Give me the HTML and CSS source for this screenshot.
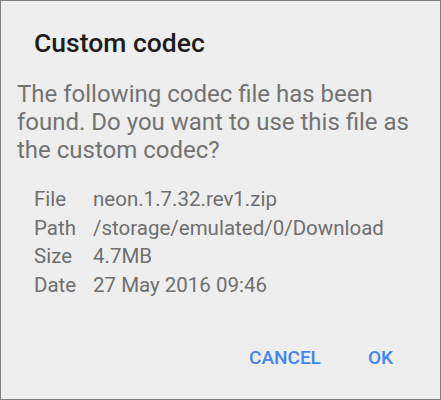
FILE: index.html
```html
<!DOCTYPE html>
<html>
<head>
<meta charset="utf-8">
<link rel="stylesheet" href="styles.css">
</head>
<body>
<div class="dialog">
  <h1 class="title">Custom codec</h1>
  <p class="message">The following codec file has been found. Do you want to use this file as the custom codec?</p>
  <div class="details">
    <span class="label">File</span><span class="value">neon.1.7.32.rev1.zip</span>
    <span class="label">Path</span><span class="value">/storage/emulated/0/Download</span>
    <span class="label">Size</span><span class="value">4.7MB</span>
    <span class="label">Date</span><span class="value">27 May 2016 09:46</span>
  </div>
  <div class="actions">
    <button class="btn">CANCEL</button>
    <button class="btn">OK</button>
  </div>
</div>
</body>
</html>
```

FILE: styles.css
```css
html, body {
  margin: 0;
  padding: 0;
}
body {
  font-family: Roboto, "Noto Sans", sans-serif;
}
.dialog {
  box-sizing: border-box;
  width: 441px;
  height: 400px;
  background: #eeeeee;
  border: 1px solid #7f7f7f;
  display: flex;
  flex-direction: column;
}
.title {
  margin: 0;
  padding: 25px 0 0 33px;
  font-size: 26.5px;
  font-weight: 500;
  line-height: 34px;
  color: #1c1c1c;
}
.message {
  margin: 20px 0 0 0;
  padding: 0 16px;
  font-size: 24px;
  line-height: 28px;
  color: #737373;
}
.details {
  margin-top: 21px;
  padding-left: 33px;
  display: grid;
  grid-template-columns: 59px auto;
  font-size: 20.5px;
  line-height: 28.6px;
  color: #6f6f6f;
}
.actions {
  margin-top: auto;
  padding: 0 47px 29px 0;
  display: flex;
  justify-content: flex-end;
  gap: 47px;
}
.btn {
  border: 0;
  background: none;
  padding: 0;
  font-family: Roboto, sans-serif;
  font-size: 19px;
  font-weight: 500;
  color: #4285f4;
  line-height: 24px;
}
```
